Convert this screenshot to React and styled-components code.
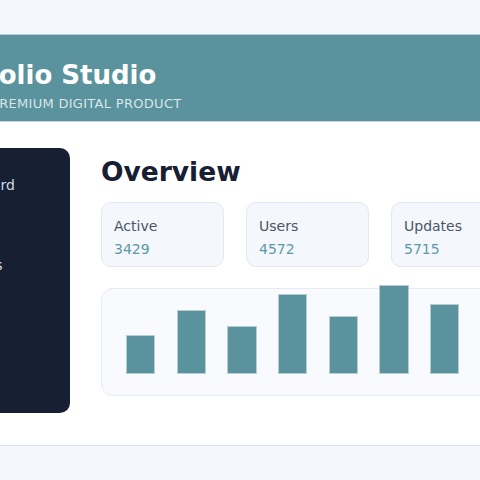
import styled, { createGlobalStyle } from "styled-components"

const GlobalStyle = createGlobalStyle`
    html, body {
        margin: 0;
        padding: 0;
    }
    body {
        background: #f4f7fb;
        font-family: "DejaVu Sans", Verdana, sans-serif;
        overflow: hidden;
    }
    * {
        box-sizing: border-box;
    }
`

const Shell = styled.div`
    display: flex;
    justify-content: center;
    overflow: hidden;
    padding-top: 34px;
`

const Page = styled.div`
    flex: none;
    width: 708px;
`

const Header = styled.header`
    background: #5a939d;
    border-top: 1px solid #bccfd5;
    border-bottom: 1px solid #c6d8dc;
    padding: 25px 96px 8px;
`

const Brand = styled.h1`
    margin: 0;
    font-size: 26px;
    font-weight: 700;
    line-height: 1.2;
    color: #ffffff;
`

const Tagline = styled.p`
    margin: 4px 0 0;
    padding-left: 9px;
    font-size: 13px;
    line-height: 1.4;
    letter-spacing: 0.3px;
    color: rgba(255, 255, 255, 0.78);
`

const Body = styled.main`
    background: #ffffff;
    padding: 26px 24px 32px;
    display: grid;
    grid-template-columns: 160px 413px;
    column-gap: 31px;
`

const Sidebar = styled.nav`
    background: #162032;
    border-radius: 10px;
    padding: 18px 17px;
    min-height: 265px;
`

const NavItem = styled.div`
    padding: 10px 12px;
    font-size: 14px;
    line-height: 1.4;
    color: #d3d9e2;
`

const Content = styled.section`
    display: flex;
    flex-direction: column;
`

const Title = styled.h2`
    margin: 8px 0 15px;
    font-size: 26.5px;
    font-weight: 700;
    line-height: 31px;
    color: #172033;
`

const Stats = styled.div`
    display: grid;
    grid-template-columns: repeat(3, 1fr);
    gap: 22px;
`

const Card = styled.div`
    background: #f4f7fb;
    border: 1px solid #e2e8f0;
    border-radius: 10px;
    padding: 14px 12px 8px;
`

const Label = styled.div`
    font-size: 14px;
    line-height: 1.3;
    color: #4a5568;
    margin-bottom: 4px;
`

const Value = styled.div`
    font-size: 14px;
    line-height: 1.3;
    color: #5b9aa5;
`

const Chart = styled.div`
    margin-top: 21px;
    height: 108px;
    background: #f8fafd;
    border: 1px solid #e6ebf2;
    border-radius: 12px;
    padding: 0 24px 21px;
    display: flex;
    align-items: flex-end;
    gap: 21.4px;
`

const Bar = styled.div`
    flex: none;
    width: 29.3px;
    height: ${(p) => p.$height}px;
    background: #5a939d;
    border: 1px solid rgba(255, 255, 255, 0.55);
`

const Footer = styled.footer`
    border-top: 1px solid #dde4ec;
    height: 34px;
`

const nav = ["Dashboard", "Projects", "Analytics", "Settings"]

const stats = [
    { label: "Active", value: 3429 },
    { label: "Users", value: 4572 },
    { label: "Updates", value: 5715 },
]

const bars = [39, 64, 48, 80, 58, 89, 70]

const App = () => {
    return (
        <>
            <GlobalStyle />
            <Shell>
                <Page>
                    <Header>
                        <Brand>Folio Studio</Brand>
                        <Tagline>PREMIUM DIGITAL PRODUCT</Tagline>
                    </Header>
                    <Body>
                        <Sidebar>
                            {nav.map((item) => (
                                <NavItem key={item}>{item}</NavItem>
                            ))}
                        </Sidebar>
                        <Content>
                            <Title>Overview</Title>
                            <Stats>
                                {stats.map((s) => (
                                    <Card key={s.label}>
                                        <Label>{s.label}</Label>
                                        <Value>{s.value}</Value>
                                    </Card>
                                ))}
                            </Stats>
                            <Chart>
                                {bars.map((h, i) => (
                                    <Bar key={i} $height={h} />
                                ))}
                            </Chart>
                        </Content>
                    </Body>
                    <Footer />
                </Page>
            </Shell>
        </>
    )
}

export default App
